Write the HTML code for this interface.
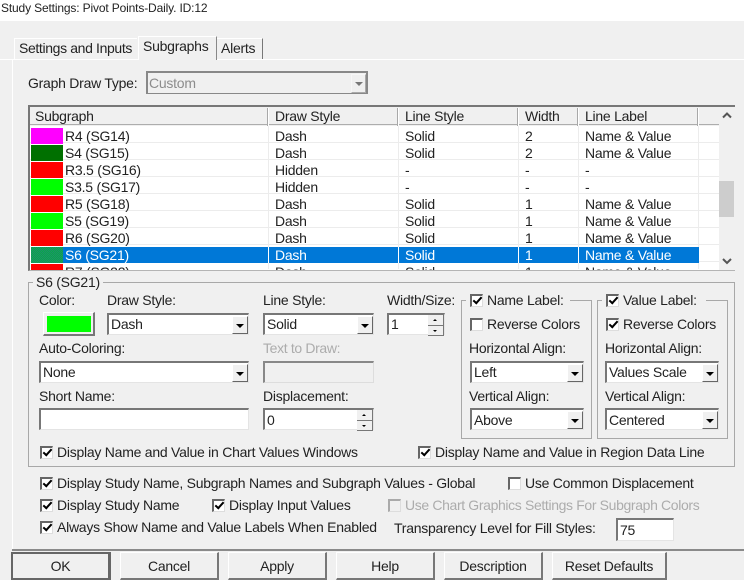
<!DOCTYPE html>
<html><head><meta charset="utf-8">
<style>
html,body{margin:0;padding:0}
body{width:744px;height:580px;overflow:hidden;position:relative;background:#f0f0f0;font:14px/16px "Liberation Sans",sans-serif;letter-spacing:-.25px;color:#222}
div,span{position:absolute;box-sizing:border-box}
.t{white-space:nowrap}
.d{color:#a0a0a0}
.f{background:#fff;border-top:2px solid #777;border-left:2px solid #777;border-right:1px solid #e4e4e4;border-bottom:1px solid #e4e4e4}
.f .t{left:2px;top:2px}
.f .t1{top:1px}
.b{width:16px;top:1px;bottom:0;right:0;background:#f0f0f0;border-right:1px solid #666;border-bottom:1px solid #666;border-top:1px solid #fff;border-left:1px solid #fff}
.b::after{content:"";position:absolute;left:3px;top:7px;border-left:4px solid transparent;border-right:4px solid transparent;border-top:4px solid #000}
.u,.v{width:16px;right:0;height:11px;background:#f0f0f0;border-right:1px solid #777;border-bottom:1px solid #777}
.u{top:0}.v{top:11px;height:10px}
.u::after{content:"";position:absolute;left:5px;top:4px;border-left:2px solid transparent;border-right:2px solid transparent;border-bottom:2px solid #000}
.v::after{content:"";position:absolute;left:5px;top:4px;border-left:2px solid transparent;border-right:2px solid transparent;border-top:2px solid #000}
.c{width:13px;height:13px;background:#fff;border-top:2px solid #666;border-left:2px solid #666;border-right:1px solid #ddd;border-bottom:1px solid #ddd}
.k::after{content:"";position:absolute;left:1px;top:1px;width:7px;height:3px;border-left:2px solid #000;border-bottom:2px solid #000;transform:rotate(-48deg)}
.g{background:#f0f0f0;border-top:1px solid #fff;border-left:1px solid #fff;border-right:2px solid #777;border-bottom:2px solid #777;text-align:center;line-height:26px;top:552px;height:28px}
.sw{left:1px;top:0;width:32px;height:16px}
.w{background:#fff}
.l{background:#adadad}
.rs{left:0;width:689px;height:1px;background:#ececec}
.cs{top:0;width:1px;height:143px;background:#ececec}
.h{top:1px;height:18px;width:2px;border-left:1px solid #a8a8a8;border-right:1px solid #fff}
</style></head><body>
<div style="left:0;top:0;width:744px;height:21px;background:#fff"></div>
<div class="t" style="left:1px;top:0;font-size:12px;letter-spacing:-.15px">Study Settings: Pivot Points-Daily. ID:12</div>

<div class="w" style="left:0;top:59px;width:744px;height:1px"></div>
<div class="w" style="left:12px;top:59px;width:1px;height:490px"></div>
<div style="left:14px;top:38px;width:123px;height:21px;background:#f0f0f0;border-top:1px solid #fff;border-left:1px solid #fff"></div>
<div class="t" style="left:19px;top:40px;letter-spacing:-.36px">Settings and Inputs</div>
<div style="left:138px;top:36px;width:79px;height:24px;background:#f0f0f0;border-top:1px solid #fff;border-left:1px solid #fff;border-right:1px solid #888"></div>
<div class="t" style="left:143px;top:38px">Subgraphs</div>
<div style="left:217px;top:38px;width:46px;height:21px;background:#f0f0f0;border-top:1px solid #fff;border-right:1px solid #777"></div>
<div class="t" style="left:221px;top:40px">Alerts</div>

<div class="t" style="left:28px;top:75px">Graph Draw Type:</div>
<div class="f" style="left:146px;top:71px;width:222px;height:23px;background:#f0f0f0;border-color:#888 #888 #888 #888;border-width:2px 2px 1px 2px"><span class="t d" style="left:1px;top:2px;color:#8c8c8c">Custom</span>
<div class="b" style="opacity:.5;width:15px"></div></div>

<!-- table -->
<div style="left:28px;top:105px;width:707px;height:166px;background:#f0f0f0;border-top:2px solid #777;border-left:2px solid #777;border-bottom:1px solid #b4b4b4;overflow:hidden">
 <div class="l" style="left:0;top:17px;width:689px;height:1px"></div>
 <div class="h" style="left:237px"></div><div class="h" style="left:367px"></div><div class="h" style="left:487px"></div><div class="h" style="left:547px"></div><div class="h" style="left:667px"></div>
 <span class="t" style="left:5px;top:1px">Subgraph</span><span class="t" style="left:245px;top:1px">Draw Style</span><span class="t" style="left:375px;top:1px">Line Style</span><span class="t" style="left:495px;top:1px">Width</span><span class="t" style="left:555px;top:1px">Line Label</span>
 <div style="left:0;top:19px;width:689px;height:145px;background:#fff;overflow:hidden">
  <div class="rs" style="top:16px"></div><div class="rs" style="top:33px"></div><div class="rs" style="top:50px"></div><div class="rs" style="top:67px"></div><div class="rs" style="top:84px"></div><div class="rs" style="top:101px"></div><div class="rs" style="top:118px"></div><div class="rs" style="top:135px"></div>
  <div class="cs" style="left:238px"></div><div class="cs" style="left:368px"></div><div class="cs" style="left:488px"></div><div class="cs" style="left:548px"></div><div class="cs" style="left:668px"></div>
  <div class="sw" style="top:2px;background:#f0f"></div>
  <span class="t" style="left:35px;top:2px">R4 (SG14)</span><span class="t" style="left:245px;top:2px">Dash</span><span class="t" style="left:375px;top:2px">Solid</span><span class="t" style="left:495px;top:2px">2</span><span class="t" style="left:555px;top:2px">Name &amp; Value</span>
  <div class="sw" style="top:19px;background:#007000"></div>
  <span class="t" style="left:35px;top:19px">S4 (SG15)</span><span class="t" style="left:245px;top:19px">Dash</span><span class="t" style="left:375px;top:19px">Solid</span><span class="t" style="left:495px;top:19px">2</span><span class="t" style="left:555px;top:19px">Name &amp; Value</span>
  <div class="sw" style="top:36px;background:#f00"></div>
  <span class="t" style="left:35px;top:36px">R3.5 (SG16)</span><span class="t" style="left:245px;top:36px">Hidden</span><span class="t" style="left:375px;top:36px">-</span><span class="t" style="left:495px;top:36px">-</span><span class="t" style="left:555px;top:36px">-</span>
  <div class="sw" style="top:53px;background:#0f0"></div>
  <span class="t" style="left:35px;top:53px">S3.5 (SG17)</span><span class="t" style="left:245px;top:53px">Hidden</span><span class="t" style="left:375px;top:53px">-</span><span class="t" style="left:495px;top:53px">-</span><span class="t" style="left:555px;top:53px">-</span>
  <div class="sw" style="top:70px;background:#f00"></div>
  <span class="t" style="left:35px;top:70px">R5 (SG18)</span><span class="t" style="left:245px;top:70px">Dash</span><span class="t" style="left:375px;top:70px">Solid</span><span class="t" style="left:495px;top:70px">1</span><span class="t" style="left:555px;top:70px">Name &amp; Value</span>
  <div class="sw" style="top:87px;background:#0f0"></div>
  <span class="t" style="left:35px;top:87px">S5 (SG19)</span><span class="t" style="left:245px;top:87px">Dash</span><span class="t" style="left:375px;top:87px">Solid</span><span class="t" style="left:495px;top:87px">1</span><span class="t" style="left:555px;top:87px">Name &amp; Value</span>
  <div class="sw" style="top:104px;background:#f00"></div>
  <span class="t" style="left:35px;top:104px">R6 (SG20)</span><span class="t" style="left:245px;top:104px">Dash</span><span class="t" style="left:375px;top:104px">Solid</span><span class="t" style="left:495px;top:104px">1</span><span class="t" style="left:555px;top:104px">Name &amp; Value</span>
  <div class="sw" style="top:121px;background:repeating-conic-gradient(#0aa84a 0 25%,#1f8f6a 0 50%) 0 0/2px 2px"></div>
  <div style="left:33px;top:121px;width:636px;height:16px;background:#0078d7"></div>
  <div class="w" style="left:238px;top:121px;width:1px;height:16px"></div><div class="w" style="left:368px;top:121px;width:1px;height:16px"></div><div class="w" style="left:488px;top:121px;width:1px;height:16px"></div><div class="w" style="left:548px;top:121px;width:1px;height:16px"></div>
  <span class="t" style="left:35px;top:121px;color:#fff">S6 (SG21)</span><span class="t" style="left:245px;top:121px;color:#fff">Dash</span><span class="t" style="left:375px;top:121px;color:#fff">Solid</span><span class="t" style="left:495px;top:121px;color:#fff">1</span><span class="t" style="left:555px;top:121px;color:#fff">Name &amp; Value</span>
  <div class="sw" style="top:138px;background:#f00"></div>
  <span class="t" style="left:35px;top:138px">R7 (SG22)</span><span class="t" style="left:245px;top:138px">Dash</span><span class="t" style="left:375px;top:138px">Solid</span><span class="t" style="left:495px;top:138px">1</span><span class="t" style="left:555px;top:138px">Name &amp; Value</span>
 </div>
 <div style="left:689px;top:0;width:16px;height:164px;background:#f0f0f0"></div>
 <div style="left:689px;top:74px;width:15px;height:36px;background:#cdcdcd"></div>
 <svg style="position:absolute;left:689px;top:0" width="16" height="164"><path d="M4 10.5L8 6.5L12 10.5" fill="none" stroke="#555" stroke-width="2"/><path d="M4 152L8 156L12 152" fill="none" stroke="#555" stroke-width="2"/></svg>
</div>

<!-- group -->
<div style="left:28px;top:282px;width:707px;height:185px;border:1px solid #a8a8a8"></div>
<div class="t" style="left:33px;top:274px;padding:0 3px;background:#f0f0f0">S6 (SG21)</div>

<div class="t" style="left:39px;top:292px">Color:</div>
<div style="left:43px;top:312px;width:52px;height:24px;background:#f0f0f0;border-top:1px solid #fff;border-left:1px solid #fff;border-right:2px solid #777;border-bottom:2px solid #777"><div style="left:3px;top:3px;width:44px;height:16px;background:#0f0"></div></div>
<div class="t" style="left:107px;top:292px">Draw Style:</div>
<div class="f" style="left:107px;top:313px;width:142px;height:22px"><span class="t t1">Dash</span><div class="b"></div></div>
<div class="t" style="left:263px;top:292px">Line Style:</div>
<div class="f" style="left:263px;top:313px;width:111px;height:22px"><span class="t t1">Solid</span><div class="b"></div></div>
<div class="t" style="left:387px;top:292px">Width/Size:</div>
<div class="f" style="left:387px;top:313px;width:58px;height:22px"><span class="t t1">1</span><div class="u"></div><div class="v"></div></div>

<div class="t" style="left:39px;top:340px">Auto-Coloring:</div>
<div class="f" style="left:39px;top:361px;width:210px;height:22px"><span class="t t1">None</span><div class="b"></div></div>
<div class="t d" style="left:263px;top:340px;color:#acacac;letter-spacing:-.35px">Text to Draw:</div>
<div class="f" style="left:263px;top:361px;width:111px;height:22px;background:#f0f0f0;border-color:#888 #ddd #ddd #888"></div>

<div class="t" style="left:39px;top:388px">Short Name:</div>
<div class="f" style="left:39px;top:408px;width:210px;height:22px"></div>
<div class="t" style="left:263px;top:388px">Displacement:</div>
<div class="f" style="left:263px;top:408px;width:111px;height:22px"><span class="t">0</span><div class="u"></div><div class="v"></div></div>

<!-- name label -->
<div style="left:461px;top:300px;width:131px;height:139px;border:1px solid #a8a8a8"></div>
<div style="left:466px;top:292px;width:104px;height:16px;background:#f0f0f0"></div>
<div class="c k" style="left:470px;top:294px"></div>
<div class="t" style="left:487px;top:292px">Name Label:</div>
<div class="c" style="left:470px;top:318px"></div>
<div class="t" style="left:487px;top:316px">Reverse Colors</div>
<div class="t" style="left:469px;top:340px">Horizontal Align:</div>
<div class="f" style="left:470px;top:361px;width:114px;height:22px"><span class="t t1">Left</span><div class="b"></div></div>
<div class="t" style="left:469px;top:388px">Vertical Align:</div>
<div class="f" style="left:470px;top:408px;width:114px;height:22px"><span class="t">Above</span><div class="b"></div></div>

<!-- value label -->
<div style="left:597px;top:300px;width:131px;height:139px;border:1px solid #a8a8a8"></div>
<div style="left:602px;top:292px;width:104px;height:16px;background:#f0f0f0"></div>
<div class="c k" style="left:606px;top:294px"></div>
<div class="t" style="left:623px;top:292px">Value Label:</div>
<div class="c k" style="left:606px;top:318px"></div>
<div class="t" style="left:623px;top:316px">Reverse Colors</div>
<div class="t" style="left:605px;top:340px">Horizontal Align:</div>
<div class="f" style="left:605px;top:361px;width:114px;height:22px"><span class="t t1">Values Scale</span><div class="b"></div></div>
<div class="t" style="left:605px;top:388px">Vertical Align:</div>
<div class="f" style="left:605px;top:408px;width:114px;height:22px"><span class="t">Centered</span><div class="b"></div></div>

<div class="c k" style="left:40px;top:446px"></div>
<div class="t" style="left:57px;top:444px">Display Name and Value in Chart Values Windows</div>
<div class="c k" style="left:418px;top:446px"></div>
<div class="t" style="left:435px;top:444px">Display Name and Value in Region Data Line</div>

<div class="c k" style="left:40px;top:477px"></div>
<div class="t" style="left:57px;top:475px">Display Study Name, Subgraph Names and Subgraph Values - Global</div>
<div class="c" style="left:508px;top:477px"></div>
<div class="t" style="left:525px;top:475px">Use Common Displacement</div>
<div class="c k" style="left:40px;top:499px"></div>
<div class="t" style="left:57px;top:497px">Display Study Name</div>
<div class="c k" style="left:212px;top:499px"></div>
<div class="t" style="left:229px;top:497px">Display Input Values</div>
<div class="c" style="left:388px;top:499px;background:#f0f0f0;border-color:#aaa #ddd #ddd #aaa"></div>
<div class="t d" style="left:405px;top:497px;color:#acacac;letter-spacing:-.36px">Use Chart Graphics Settings For Subgraph Colors</div>
<div class="c k" style="left:40px;top:521px"></div>
<div class="t" style="left:57px;top:519px">Always Show Name and Value Labels When Enabled</div>
<div class="t" style="left:394px;top:520px">Transparency Level for Fill Styles:</div>
<div class="f" style="left:616px;top:518px;width:58px;height:23px"><span class="t">75</span></div>

<div style="left:12px;top:549px;width:732px;height:2px;background:#8a8a8a"></div>
<div class="g" style="left:11px;width:100px;border:2px solid #666;border-right:3px solid #666;line-height:25px">OK</div>
<div class="g" style="left:120px;width:99px">Cancel</div>
<div class="g" style="left:228px;width:99px">Apply</div>
<div class="g" style="left:336px;width:99px">Help</div>
<div class="g" style="left:444px;width:99px">Description</div>
<div class="g" style="left:552px;width:115px">Reset Defaults</div>
</body></html>
